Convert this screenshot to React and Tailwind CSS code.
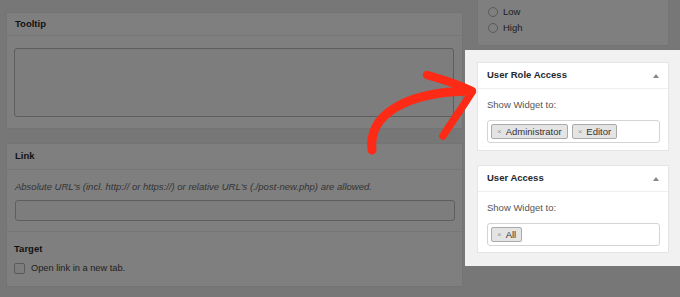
function Tag({ label }) {
  return (
    <span className="flex h-[15px] items-center gap-[4px] rounded-[2px] border border-[#aaaaaa] bg-[#e4e4e4] px-[5px] text-[9.5px] leading-none text-[#333]">
      <span className="text-[8px] text-[#999]">×</span>
      {label}
    </span>
  );
}

function AccessCard({ title, tags, height }) {
  return (
    <div className={`flex flex-col border border-[#e5e5e5] bg-white ${height}`}>
      <div className="flex h-[26px] shrink-0 items-center justify-between border-b border-[#eeeeee] pl-[9px] pr-[9px]">
        <span className="text-[9.5px] font-bold text-[#23282d]">{title}</span>
        <svg width="6" height="4" viewBox="0 0 6 4">
          <path d="M3 0 L6 4 L0 4 Z" fill="#82878c" />
        </svg>
      </div>
      <div className="px-[8px] pl-[9px]">
        <p className="mt-[10px] text-[9.5px] leading-[12px] text-[#555]">Show Widget to:</p>
        <div className="mt-[9px] flex h-[23px] items-center gap-[4px] rounded-[3px] border border-[#d4d4d4] bg-white px-[3px]">
          {tags.map((t) => (
            <Tag key={t} label={t} />
          ))}
        </div>
      </div>
    </div>
  );
}

export default function App() {
  return (
    <div className="relative flex h-[297px] w-[680px] overflow-hidden bg-[#777777] font-['Liberation_Sans',Arial,sans-serif]">
      {/* dimmed left column */}
      <div className="flex w-[465px] shrink-0 flex-col gap-[14px] pl-[6px] pr-[2px] pt-[12px]">
        <div className="flex h-[117px] flex-col border border-[#747474] bg-[#7f7f7f]">
          <div className="flex h-[23px] items-center border-b border-[#767676] px-[8px] text-[9.5px] font-bold text-[#111]">
            Tooltip
          </div>
          <div className="pl-[7px] pr-[8px] pt-[12px]">
            <div className="h-[69px] rounded-[3px] border border-[#5e5e5e] bg-[#7d7d7d]" />
          </div>
        </div>

        <div className="flex h-[144px] flex-col border border-[#747474] bg-[#7f7f7f]">
          <div className="flex h-[26px] shrink-0 items-center border-b border-[#767676] px-[8px] text-[9.5px] font-bold text-[#111]">
            Link
          </div>
          <div className="border-b border-[#767676] pb-[10px] pl-[8px] pr-[7px] pt-[11px]">
            <p className="text-[9.5px] italic leading-[12px] text-[#333]">
              Absolute URL's (incl. http:// or https://) or relative URL's (./post-new.php) are allowed.
            </p>
            <div className="mt-[7px] h-[21px] rounded-[3px] border border-[#5e5e5e] bg-[#7d7d7d]" />
          </div>
          <div className="pl-[7px] pt-[11px]">
            <p className="text-[9.5px] font-bold leading-[12px] text-[#111]">Target</p>
            <label className="mt-[7px] flex items-center gap-[6px] text-[9.25px] leading-[12px] text-[#1e1e1e]">
              <span className="h-[11px] w-[11px] rounded-[2px] border border-[#5a5a5a] bg-[#7d7d7d]" />
              Open link in a new tab.
            </label>
          </div>
        </div>
      </div>

      {/* right column */}
      <div className="flex w-[215px] shrink-0 flex-col">
        <div className="pl-[12px] pr-[11px]">
          <div className="flex h-[46px] flex-col justify-end gap-[5px] border-x border-b border-[#747474] bg-[#7f7f7f] pb-[12px] pl-[10px]">
            {["Low", "High"].map((r) => (
              <div key={r} className="flex items-center gap-[5px] text-[9.5px] leading-[11px] text-[#1e1e1e]">
                <span className="h-[10px] w-[10px] rounded-full border border-[#5a5a5a]" />
                {r}
              </div>
            ))}
          </div>
        </div>
        <div className="mt-[4px] flex h-[216px] flex-col gap-[14px] bg-[#f1f1f1] pl-[12px] pr-[11px] pt-[12px]">
          <AccessCard title="User Role Access" tags={["Administrator", "Editor"]} height="h-[89px]" />
          <AccessCard title="User Access" tags={["All"]} height="h-[88px]" />
        </div>
      </div>

      {/* red arrow */}
      <svg className="pointer-events-none absolute inset-0" width="680" height="297" viewBox="0 0 680 297">
        <g fill="none" stroke="#fd2b15" strokeLinecap="round" strokeLinejoin="round">
          <path d="M372 150 C368 115, 405 92, 470 91" strokeWidth="9" />
          <path d="M427 75 C445 80, 460 85, 472 91" strokeWidth="8.5" />
          <path d="M472 92 C462 108, 452 122, 443 136" strokeWidth="7.5" />
        </g>
      </svg>
    </div>
  );
}
